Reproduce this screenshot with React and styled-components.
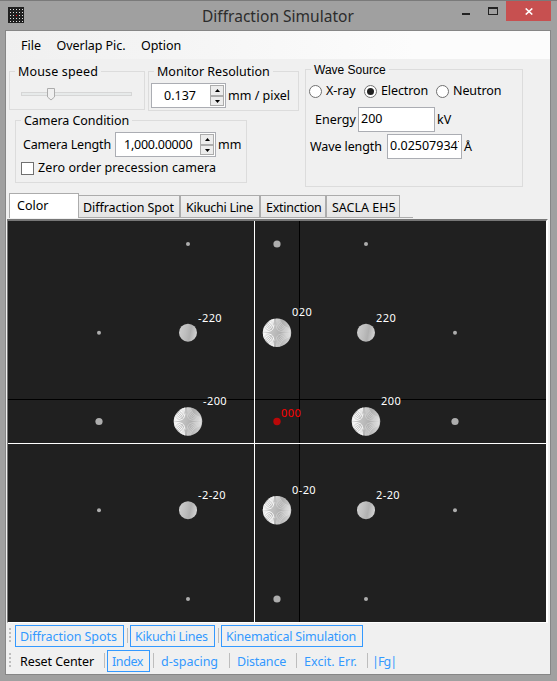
import React from "react";
import styled, { createGlobalStyle, css } from "styled-components";

const Global = createGlobalStyle`
  *, *::before, *::after { box-sizing: border-box; }
  body { margin: 0; background: #a0a0a0; color: #000; }
  body, button, input { font: 12.5px/16px "Noto Sans", "Open Sans", sans-serif; }
`;

const Window = styled.div`
  width: 557px;
  height: 681px;
  overflow: hidden;
  padding: 0 6px 6px 5px;
  border-top: 1px solid #7a7a7a;
  background: #a0a0a0;
`;

const TitleBar = styled.header`
  display: grid;
  grid-template-columns: 197px 1fr auto;
  height: 29px;
`;

const AppIcon = styled.svg`
  display: block;
  margin: 6px 0 0 3px;
`;

const Title = styled.h1`
  margin: 4px 0 0;
  font-size: 15.5px;
  line-height: 22px;
  font-weight: 400;
  letter-spacing: 0.02px;
  color: #2c2c2c;
  white-space: nowrap;
`;

const WindowButtons = styled.div`
  display: flex;
  align-items: flex-start;
  margin-right: 1px;
`;

const Minimize = styled.i`
  width: 8px;
  height: 2px;
  margin: 12px 18px 0 0;
  background: #222;
`;

const Maximize = styled.i`
  width: 10px;
  height: 8px;
  margin: 6px 8px 0 0;
  border: 1px solid #222;
  border-top-width: 2px;
`;

const Close = styled.button`
  display: grid;
  place-items: center;
  width: 45px;
  height: 20px;
  padding: 0;
  border: 0;
  background: #c75050;
  margin-right: -1px;
`;

const Client = styled.main`
  height: 645px;
  border: 1px solid #868686;
  background: #f0f0f0;
`;

const Text = styled.span`
  white-space: pre;
  letter-spacing: ${(p) => p.$ls || 0}px;
  width: ${(p) => (p.$w ? p.$w + "px" : "auto")};
  flex: none;
`;

const Unit = styled(Text)`
  margin-left: ${(p) => p.$gap ?? 2}px;
`;

const MenuBar = styled.nav`
  display: flex;
  align-items: center;
  gap: 15.5px;
  height: 28px;
  padding: 1px 0 0 15px;
  background: linear-gradient(90deg, #f0f0f0, #fcfcfc 75%);
`;

const Form = styled.section`
  display: flex;
  justify-content: space-between;
  height: 134px;
  padding: 10px 27px 0 3px;
`;

const LeftColumn = styled.div`
  padding-top: 2px;
`;

const Pair = styled.div`
  display: flex;
  gap: 3px;
`;

const Group = styled.section`
  width: ${(p) => p.$w}px;
  height: ${(p) => p.$h}px;
  margin: ${(p) => p.$m || "0"};
  border: 1px solid #dcdcdc;
`;

const Legend = styled.div`
  width: fit-content;
  height: 16px;
  margin: -8px 0 -1px ${(p) => p.$x}px;
  padding: 0 3px;
  background: #f0f0f0;
  white-space: nowrap;
  letter-spacing: ${(p) => p.$ls || 0}px;
  ${(p) => p.$arial && css`font-family: "Liberation Sans", Arial, sans-serif; font-size: 12px;`}
`;

const Line = styled.div`
  display: flex;
  align-items: center;
  height: ${(p) => p.$h}px;
  margin: ${(p) => p.$m || "0"};
`;

const SliderArt = styled.svg`
  display: block;
  margin: 9px 0 0 11px;
`;

const NumberBox = styled.div`
  display: flex;
  width: ${(p) => p.$w}px;
  height: 25px;
  padding: 1px;
  border: 1px solid #abadb3;
  background: #fff;
`;

const NumberValue = styled.span`
  flex: 1;
  padding: 3px 0 0 ${(p) => p.$pad}px;
  line-height: 16px;
  white-space: nowrap;
  letter-spacing: ${(p) => p.$ls || 0}px;
`;

const Spinner = styled.div`
  display: grid;
  grid-template-rows: 11px 10px;
  width: 14px;
`;

const SpinButton = styled.button`
  display: grid;
  place-items: center;
  padding: 0;
  border: 1px solid #acacac;
  background: #ececec;
`;

const TextField = styled.div`
  width: ${(p) => p.$w}px;
  height: 25px;
  padding: 3px 2px 0;
  border: 1px solid #abadb3;
  background: #fff;
`;

const Clip = styled.div`
  overflow: hidden;
  white-space: nowrap;
`;

const CheckBox = styled.i`
  width: 13px;
  height: 13px;
  margin-right: 4px;
  border: 1px solid #707070;
  background: #fff;
`;

const Radio = styled.i`
  display: grid;
  place-items: center;
  width: 13px;
  height: 13px;
  margin-right: 4px;
  border: 1px solid #707070;
  border-radius: 50%;
  background: #fff;
  &::after {
    content: "";
    width: 7px;
    height: 7px;
    border-radius: 50%;
    background: ${(p) => (p.$on ? "#212121" : "transparent")};
  }
`;

const Tabs = styled.div`
  display: flex;
  align-items: flex-end;
  height: 26px;
  padding: 0 0 1px 3px;
`;

const Tab = styled.div`
  width: ${(p) => p.$w}px;
  height: 23px;
  padding: 4px 0 0 ${(p) => (p.$joined ? 5 : 4)}px;
  border: 1px solid #acacac;
  border-left-width: ${(p) => (p.$joined ? 1 : 0)}px;
  background: linear-gradient(#f0f0f0, #e5e5e5);
  white-space: nowrap;
  letter-spacing: ${(p) => p.$ls || 0}px;
  ${(p) =>
    p.$active &&
    css`
      height: 25px;
      padding: 4px 0 0 7px;
      border-width: 1px 1px 0;
      background: #fff;
    `}
`;

const TabEdge = styled.i`
  width: 13px;
  height: 1px;
  background: #acacac;
`;

const Plot = styled.svg`
  display: block;
  width: 541px;
  height: 404px;
  margin-left: 1px;
  border: 1px solid #777;
  border-width: 2px 2px 1px 1px;
  border-right-color: #fff;
  border-bottom-color: #fff;
  background: #202020;
`;

const SpotLabel = styled.text`
  font: 11px "Noto Sans", sans-serif;
  letter-spacing: 0.4px;
  fill: ${(p) => (p.$origin ? "#f00" : "#fff")};
`;

const ToolRow = styled.div`
  display: flex;
  align-items: center;
  height: 25px;
  padding-left: 3px;
`;

const Grip = styled.i`
  width: 2px;
  height: 15px;
  margin-right: 4px;
  background: repeating-linear-gradient(#bdbdbd 0 2px, transparent 2px 4px);
`;

const Tool = styled.button`
  width: ${(p) => p.$w}px;
  height: 22px;
  padding: 2px 0 0 ${(p) => p.$pad ?? 4}px;
  border: 1px solid ${(p) => (p.$checked ? "#3399ff" : "transparent")};
  background: transparent;
  color: ${(p) => (p.$plain ? "#000" : "#3399ff")};
  text-align: left;
  white-space: nowrap;
  letter-spacing: ${(p) => p.$ls || 0}px;
`;

const Separator = styled.i`
  width: 1px;
  height: 15px;
  margin: 0 2px 0 3px;
  background: #bdbdbd;
`;

const Numeric = ({ w, pad, ls, children }) => (
  <NumberBox $w={w}>
    <NumberValue $pad={pad} $ls={ls}>{children}</NumberValue>
    <Spinner>
      <SpinButton><svg width="5" height="3"><path d="M0 3 2.500 0 5 3z" /></svg></SpinButton>
      <SpinButton><svg width="5" height="3"><path d="M0 0 2.500 3 5 0z" /></svg></SpinButton>
    </Spinner>
  </NumberBox>
);

const COLS = [99, 188, 277, 366, 455];
const ROWS = [244, 332.7, 421.5, 510.2, 599];
const RADII = [
  [0, 2, 3.6, 2, 0],
  [2, 9, 14.2, 9, 2],
  [3.6, 14.2, 3.7, 14.2, 3.6],
  [2, 9, 14.2, 9, 2],
  [0, 2, 3.6, 2, 0],
];
const LABELS = [
  ["-220", 198, 322], ["020", 292, 316], ["220", 376, 322],
  ["-200", 203, 405], ["000", 281, 417], ["200", 381, 405],
  ["-2-20", 198, 499], ["0-20", 292, 494], ["2-20", 376, 499],
];
const FRINGES = [8, 19, 31, 44, 58];
const STEPS = [1, 1.6, 2.4, 3.5, 5, 7, 10, 15];

const Spot = ({ x, y, r, origin }) => (
  <g transform={`translate(${x} ${y})`}>
    <circle r={r} fill={origin ? "#b90808" : r < 5 ? "#adadad" : "url(#disc)"} />
    {r > 12 && (
      <g clipPath="url(#discClip)" fill="none" stroke="#fff" strokeWidth="1">
        {FRINGES.map((c) =>
          [[-1, -1], [-1, 1], [1, -1], [1, 1]].map(([sx, sy]) => (
            <path
              key={`${c}${sx}${sy}`}
              opacity={sx > 0 ? 0.3 : 0.9}
              d={"M" + STEPS.map((u) => `${-2 + sx * u} ${(sy * c) / u}`).join("L")}
            />
          ))
        )}
      </g>
    )}
  </g>
);

const AppMark = () => (
  <AppIcon width="16" height="16" viewBox="0 0 16 16">
    <rect width="16" height="16" fill="#202020" />
    {[2, 5, 8, 11, 14].map((y) =>
      [2, 5, 8, 11, 14].map((x) => (
        <rect key={`${x}-${y}`} x={x} y={y} width="1" height="1" fill={x === 8 && y === 8 ? "#f00" : "#ddd"} />
      ))
    )}
  </AppIcon>
);

export default function App() {
  return (
    <Window>
      <Global />
      <TitleBar>
        <AppMark />
        <Title>Diffraction Simulator</Title>
        <WindowButtons>
          <Minimize />
          <Maximize />
          <Close aria-label="Close">
            <svg width="8" height="7"><path d="M.7.5 7.3 6.5M7.3.5.7 6.5" stroke="#fff" strokeWidth="1.6" /></svg>
          </Close>
        </WindowButtons>
      </TitleBar>
      <Client>
        <MenuBar>
          <Text>File</Text>
          <Text $ls={-0.05}>Overlap Pic.</Text>
          <Text $ls={-0.08}>Option</Text>
        </MenuBar>
        <Form>
          <LeftColumn>
            <Pair>
              <Group $w={136} $h={39}>
                <Legend $x={5} $ls={0.15}>Mouse speed</Legend>
                <SliderArt width="112" height="13">
                  <rect x=".5" y="4.5" width="110" height="3" fill="#e7eaea" stroke="#d6d6d6" />
                  <path d="M26.500 .5h7v8.500l-3.500 3-3.500-3z" fill="#f0f0f0" stroke="#acacac" />
                </SliderArt>
              </Group>
              <Group $w={151} $h={40}>
                <Legend $x={5}>Monitor Resolution</Legend>
                <Line $h={25} $m="4px 0 0 2px">
                  <Numeric w={75} pad={11}>0.137</Numeric>
                  <Unit>mm / pixel</Unit>
                </Line>
              </Group>
            </Pair>
            <Group $w={232} $h={63} $m="9px 0 0 6px">
              <Legend $x={5} $ls={-0.05}>Camera Condition</Legend>
              <Line $h={25} $m="4px 0 0 7px">
                <Text $w={92} $ls={-0.16}>Camera Length</Text>
                <Numeric w={101} pad={7} ls={-0.25}>1,000.00000</Numeric>
                <Unit>mm</Unit>
              </Line>
              <Line $h={16} $m="3px 0 0 5px">
                <CheckBox />
                <Text $ls={0.09}>Zero order precession camera</Text>
              </Line>
            </Group>
          </LeftColumn>
          <Group $w={218} $h={118}>
            <Legend $x={5} $arial>Wave Source</Legend>
            <Line $h={16} $m="6px 0 0 3px">
              <Radio /><Text $w={38}>X-ray</Text>
              <Radio $on /><Text $w={55} $ls={-0.1}>Electron</Text>
              <Radio /><Text $ls={-0.1}>Neutron</Text>
            </Line>
            <Line $h={25} $m="8px 0 0 9px">
              <Text $w={43}>Energy</Text>
              <TextField $w={77}><Clip>200</Clip></TextField>
              <Unit>kV</Unit>
            </Line>
            <Line $h={25} $m="2px 0 0 4px">
              <Text $w={77} $ls={-0.1}>Wave length</Text>
              <TextField $w={75}><Clip>0.025079347</Clip></TextField>
              <Unit>Å</Unit>
            </Line>
          </Group>
        </Form>
        <Tabs>
          <Tab $w={70} $active>Color</Tab>
          <Tab $w={101} $ls={-0.05}>Diffraction Spot</Tab>
          <Tab $w={80} $joined $ls={-0.25}>Kikuchi Line</Tab>
          <Tab $w={66} $joined $ls={-0.25}>Extinction</Tab>
          <Tab $w={74} $joined>SACLA EH5</Tab>
          <TabEdge />
        </Tabs>
        <Plot viewBox="8 221 538 401">
          <defs>
            <linearGradient id="disc" x1="0" y1="0" x2="1" y2="0.2">
              <stop offset="0" stopColor="#d0d0d0" />
              <stop offset=".45" stopColor="#bebebe" />
              <stop offset=".7" stopColor="#b0b0b0" />
              <stop offset="1" stopColor="#cecece" />
            </linearGradient>
            <clipPath id="discClip"><circle r="14.200" /></clipPath>
          </defs>
          <path d="M299.500 221V622M8 399.500H546" stroke="#000" />
          <path d="M254.500 221V622M8 443.500H546" stroke="#fff" />
          {ROWS.map((y, j) =>
            COLS.map((x, i) =>
              RADII[j][i] ? <Spot key={`${i}-${j}`} x={x} y={y} r={RADII[j][i]} origin={i === 2 && j === 2} /> : null
            )
          )}
          {LABELS.map(([t, x, y]) => (
            <SpotLabel key={t} x={x} y={y} $origin={t === "000"}>{t}</SpotLabel>
          ))}
        </Plot>
        <ToolRow>
          <Grip />
          <Tool $w={109} $checked $ls={-0.05}>Diffraction Spots</Tool>
          <Separator />
          <Tool $w={85} $checked $ls={-0.25}>Kikuchi Lines</Tool>
          <Separator />
          <Tool $w={142} $checked $ls={-0.2}>Kinematical Simulation</Tool>
        </ToolRow>
        <ToolRow>
          <Grip />
          <Tool $w={86} $plain $ls={-0.08}>Reset Center</Tool>
          <Separator />
          <Tool $w={43} $checked $ls={-0.4}>Index</Tool>
          <Separator />
          <Tool $w={70} $pad={4}>d-spacing</Tool>
          <Separator />
          <Tool $w={61} $ls={-0.2}>Distance</Tool>
          <Separator />
          <Tool $w={65} $ls={0.05}>Excit. Err.</Tool>
          <Separator />
          <Tool $w={30} $pad={1} $ls={-0.9}>|Fg|</Tool>
        </ToolRow>
      </Client>
    </Window>
  );
}
